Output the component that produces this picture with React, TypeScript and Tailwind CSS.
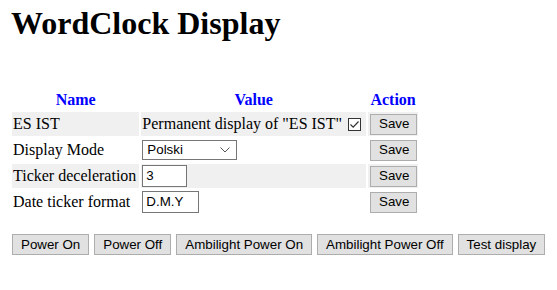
import React from 'react';

const btn =
  "shrink-0 whitespace-nowrap h-[21px] px-[8px] bg-[#e1e1e1] border border-[#adadad] text-[13.33px] leading-none text-black font-['Liberation_Sans',Arial,sans-serif]";

function SaveButton() {
  return <button className={btn + " w-[47px] px-0"}>Save</button>;
}

function Checkbox() {
  return (
    <span className="inline-flex w-[13px] h-[13px] border border-[#333] bg-white items-center justify-center align-[-1px] ml-[6px] mr-[4px]">
      <svg width="11" height="11" viewBox="0 0 11 11">
        <path d="M1.5 5.5 L4.2 8.2 L9.5 2.5" fill="none" stroke="#333" strokeWidth="1.2" />
      </svg>
    </span>
  );
}

export default function App() {
  const rows = [
    {
      name: 'ES IST',
      shaded: true,
      value: (
        <span className="whitespace-nowrap">
          Permanent display of "ES IST"
          <Checkbox />
        </span>
      ),
    },
    {
      name: 'Display Mode',
      shaded: false,
      value: (
        <div className="inline-flex items-center justify-between w-[95px] h-[20px] border border-[#767676] bg-white pl-[4px] pr-[6px] text-[13.33px] font-['Liberation_Sans',Arial,sans-serif] align-middle">
          <span>Polski</span>
          <svg width="10" height="6" viewBox="0 0 10 6">
            <path d="M0.5 0.5 L5 5 L9.5 0.5" fill="none" stroke="#555" strokeWidth="1" />
          </svg>
        </div>
      ),
    },
    {
      name: 'Ticker deceleration',
      shaded: true,
      value: (
        <div className="inline-flex items-center w-[45px] h-[22px] border border-[#767676] bg-white px-[3px] text-[13.33px] font-['Liberation_Sans',Arial,sans-serif] align-middle">
          3
        </div>
      ),
    },
    {
      name: 'Date ticker format',
      shaded: false,
      value: (
        <div className="inline-flex items-center w-[57px] h-[22px] border border-[#767676] bg-white px-[3px] text-[13.33px] font-['Liberation_Sans',Arial,sans-serif] align-middle">
          D.M.Y
        </div>
      ),
    },
  ];

  return (
    <div className="min-h-screen bg-white text-black font-['Liberation_Serif','Times_New_Roman',serif] px-[8px]">
      <h1 className="m-0 pt-[5px] text-[32px] leading-[37px] font-bold pl-[3px]">WordClock Display</h1>

      <table className="mt-[46px] ml-[2px] border-separate border-spacing-[2px] text-[16px] leading-[18px]">
        <thead>
          <tr>
            <th className="p-[1px] text-[#0000ff] font-bold">Name</th>
            <th className="p-[1px] text-[#0000ff] font-bold">Value</th>
            <th className="p-[1px] text-[#0000ff] font-bold">Action</th>
          </tr>
        </thead>
        <tbody>
          {rows.map((r) => (
            <tr key={r.name} className={r.shaded ? 'bg-[#f0f0f0]' : ''}>
              <td className="py-[1px] pl-[1px] pr-[3px] h-[24px] whitespace-nowrap">{r.name}</td>
              <td className="p-[1px] h-[24px] whitespace-nowrap">{r.value}</td>
              <td className="py-[1px] pl-[2px] pr-[1px] h-[24px]">
                <SaveButton />
              </td>
            </tr>
          ))}
        </tbody>
      </table>

      <div className="flex gap-[5px] mt-[18px] pl-[4px]">
        <button className={btn}>Power On</button>
        <button className={btn}>Power Off</button>
        <button className={btn}>Ambilight Power On</button>
        <button className={btn}>Ambilight Power Off</button>
        <button className={btn}>Test display</button>
      </div>
    </div>
  );
}
